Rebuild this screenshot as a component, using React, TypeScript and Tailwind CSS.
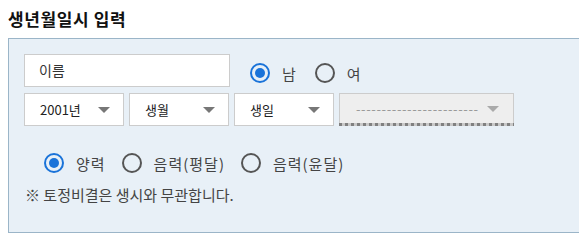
import { useState } from 'react';

const font = { fontFamily: '"Noto Sans CJK KR", "Noto Sans", sans-serif' };

function Radio({ checked, label, onClick }: { checked: boolean; label: string; onClick: () => void }) {
  return (
    <button type="button" onClick={onClick} className="flex items-center gap-[12px]">
      <span
        className={`w-[20px] h-[20px] rounded-full border-2 flex items-center justify-center ${
          checked ? 'border-[#1a73d9]' : 'border-[#555555]'
        }`}
      >
        {checked && <span className="w-[10px] h-[10px] rounded-full bg-[#1a73d9]" />}
      </span>
      <span className="text-[15px] text-[#444] leading-none tracking-[1px]">{label}</span>
    </button>
  );
}

function Select({ label, width }: { label: string; width: string }) {
  return (
    <div className={`${width} h-[33px] flex items-center justify-between pl-[15px] pr-[13px] border bg-white border-[#cccccc]`}>
      <span className="text-[13px] text-[#222]">{label}</span>
      <span className="w-0 h-0 border-l-[6px] border-r-[6px] border-t-[6px] border-l-transparent border-r-transparent border-t-[#777777]" />
    </div>
  );
}

export default function App() {
  const [gender, setGender] = useState('m');
  const [cal, setCal] = useState('solar');

  return (
    <div className="w-[579px] h-[241px] bg-white overflow-hidden" style={font}>
      <h2 className="pl-[8px] pt-[6px] h-[38px] text-[17px] font-bold text-[#111] tracking-[0.6px]">생년월일시 입력</h2>
      <div className="ml-[8px] w-[600px] h-[195px] bg-[#e8f0f7] border border-[#9bb5c8] pl-[15px] pt-[15px]">
        <div className="flex items-center">
          <div className="w-[206px] h-[33px] bg-white border border-[#cccccc] flex items-center pl-[14px] text-[14px] text-[#333]">
            이름
          </div>
          <div className="flex items-center gap-[18px] ml-[20px] mt-[5px]">
            <Radio checked={gender === 'm'} label="남" onClick={() => setGender('m')} />
            <Radio checked={gender === 'f'} label="여" onClick={() => setGender('f')} />
          </div>
        </div>
        <div className="flex gap-[5px] mt-[6px]">
          <Select label="2001년" width="w-[100px]" />
          <Select label="생월" width="w-[100px]" />
          <Select label="생일" width="w-[100px]" />
          <div className="w-[175px] h-[33px] flex flex-col">
            <div className="flex-1 flex items-center justify-between pl-[16px] pr-[14px] bg-[#eeeeee] border border-b-0 border-[#cccccc]">
              <span className="text-[13px] text-[#999] tracking-[0.6px]">------------------------</span>
              <span className="w-0 h-0 border-l-[6px] border-r-[6px] border-t-[6px] border-l-transparent border-r-transparent border-t-[#aaaaaa]" />
            </div>
            <div className="h-[3px] bg-[repeating-linear-gradient(90deg,#808080_0_3px,#c8c8c8_3px_6px)]" />
          </div>
        </div>
        <div className="flex items-center gap-[16px] pl-[20px] mt-[27px]">
          <Radio checked={cal === 'solar'} label="양력" onClick={() => setCal('solar')} />
          <Radio checked={cal === 'lunar'} label="음력(평달)" onClick={() => setCal('lunar')} />
          <Radio checked={cal === 'leap'} label="음력(윤달)" onClick={() => setCal('leap')} />
        </div>
        <p className="mt-[11px] pl-[1px] text-[15px] text-[#444]">※ 토정비결은 생시와 무관합니다.</p>
      </div>
    </div>
  );
}
